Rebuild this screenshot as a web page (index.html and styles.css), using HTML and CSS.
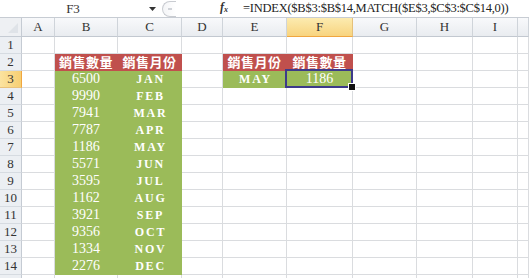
FILE: index.html
```html
<!DOCTYPE html>
<html>
<head>
<meta charset="utf-8">
<link rel="stylesheet" href="styles.css">
</head>
<body>
<div class="fbar">
  <div class="namebox">F3</div>
  <div class="dd"><svg width="7" height="4" viewBox="0 0 7 4"><path d="M0 0h7L3.5 4z" fill="#333"/></svg></div>
  <div class="split"><span class="dash"></span></div>
  <div class="fx">f<sub>x</sub></div>
  <div class="formula">=INDEX($B$3:$B$14,MATCH($E$3,$C$3:$C$14,0))</div>
</div>
<div class="sheet">
  <div class="corner"><svg width="10" height="10" viewBox="0 0 10 10"><path d="M10 0V10H0z" fill="#dfe3e8"/></svg></div>
  <div class="ch">A</div><div class="ch">B</div><div class="ch">C</div><div class="ch">D</div><div class="ch">E</div><div class="ch sel">F</div><div class="ch">G</div><div class="ch">H</div><div class="ch">I</div><div class="ch"></div>

  <div class="rh">1</div><div class="c"></div><div class="c"></div><div class="c"></div><div class="c"></div><div class="c"></div><div class="c"></div><div class="c"></div><div class="c"></div><div class="c"></div><div class="c"></div>

  <div class="rh">2</div><div class="c"></div><div class="c red zh">銷售數量</div><div class="c red zh">銷售月份</div><div class="c"></div><div class="c red zh">銷售月份</div><div class="c red zh">銷售數量</div><div class="c"></div><div class="c"></div><div class="c"></div><div class="c"></div>

  <div class="rh sel">3</div><div class="c"></div><div class="c green num">6500</div><div class="c green mon">JAN</div><div class="c"></div><div class="c green mon">MAY</div><div class="c green num active">1186</div><div class="c"></div><div class="c"></div><div class="c"></div><div class="c"></div>

  <div class="rh">4</div><div class="c"></div><div class="c green num">9990</div><div class="c green mon">FEB</div><div class="c"></div><div class="c"></div><div class="c"></div><div class="c"></div><div class="c"></div><div class="c"></div><div class="c"></div>

  <div class="rh">5</div><div class="c"></div><div class="c green num">7941</div><div class="c green mon">MAR</div><div class="c"></div><div class="c"></div><div class="c"></div><div class="c"></div><div class="c"></div><div class="c"></div><div class="c"></div>

  <div class="rh">6</div><div class="c"></div><div class="c green num">7787</div><div class="c green mon">APR</div><div class="c"></div><div class="c"></div><div class="c"></div><div class="c"></div><div class="c"></div><div class="c"></div><div class="c"></div>

  <div class="rh">7</div><div class="c"></div><div class="c green num">1186</div><div class="c green mon">MAY</div><div class="c"></div><div class="c"></div><div class="c"></div><div class="c"></div><div class="c"></div><div class="c"></div><div class="c"></div>

  <div class="rh">8</div><div class="c"></div><div class="c green num">5571</div><div class="c green mon">JUN</div><div class="c"></div><div class="c"></div><div class="c"></div><div class="c"></div><div class="c"></div><div class="c"></div><div class="c"></div>

  <div class="rh">9</div><div class="c"></div><div class="c green num">3595</div><div class="c green mon">JUL</div><div class="c"></div><div class="c"></div><div class="c"></div><div class="c"></div><div class="c"></div><div class="c"></div><div class="c"></div>

  <div class="rh">10</div><div class="c"></div><div class="c green num">1162</div><div class="c green mon">AUG</div><div class="c"></div><div class="c"></div><div class="c"></div><div class="c"></div><div class="c"></div><div class="c"></div><div class="c"></div>

  <div class="rh">11</div><div class="c"></div><div class="c green num">3921</div><div class="c green mon">SEP</div><div class="c"></div><div class="c"></div><div class="c"></div><div class="c"></div><div class="c"></div><div class="c"></div><div class="c"></div>

  <div class="rh">12</div><div class="c"></div><div class="c green num">9356</div><div class="c green mon">OCT</div><div class="c"></div><div class="c"></div><div class="c"></div><div class="c"></div><div class="c"></div><div class="c"></div><div class="c"></div>

  <div class="rh">13</div><div class="c"></div><div class="c green num">1334</div><div class="c green mon">NOV</div><div class="c"></div><div class="c"></div><div class="c"></div><div class="c"></div><div class="c"></div><div class="c"></div><div class="c"></div>

  <div class="rh">14</div><div class="c"></div><div class="c green num">2276</div><div class="c green mon">DEC</div><div class="c"></div><div class="c"></div><div class="c"></div><div class="c"></div><div class="c"></div><div class="c"></div><div class="c"></div>

  <div class="rh"></div><div class="c"></div><div class="c"></div><div class="c"></div><div class="c"></div><div class="c"></div><div class="c"></div><div class="c"></div><div class="c"></div><div class="c"></div><div class="c"></div>
</div>
</body>
</html>
```
FILE: styles.css
```css
* { box-sizing: border-box; }
html, body { margin: 0; padding: 0; background: #fff; overflow: hidden; }
body { width: 529px; height: 278px; font-family: "Liberation Serif", serif; color: #222; }

.fbar {
  height: 18px;
  display: flex;
  align-items: center;
  border-bottom: 1px solid #c7ccd3;
  background: #fff;
}
.namebox { width: 146px; text-align: center; font-size: 13px; line-height: 17px; color: #333; }
.dd { width: 12px; display: flex; align-items: center; justify-content: center; padding-top: 1px; }
.split {
  margin-left: 4px;
  width: 14px; height: 16px;
  border: 1px solid #c9ccd1;
  border-right: none;
  border-radius: 8px 0 0 8px;
  background: linear-gradient(90deg, #f4f5f7, #fff);
  display: flex; align-items: center; justify-content: center;
}
.dash { width: 4px; height: 2px; background: #d0d3d8; display: block; }
.fx {
  margin-left: 44px;
  width: 20px;
  font-style: italic; font-weight: bold; font-size: 12px; color: #333; line-height: 17px;
}
.fx sub { font-size: 8px; vertical-align: -1px; }
.formula {
  margin-left: 3px;
  font-size: 12.5px; letter-spacing: -0.25px; color: #222; white-space: nowrap; line-height: 17px;
}

.sheet {
  display: grid;
  grid-template-columns: 22px 33px 63px 64px 41px 64px 66px 64px 56px 45px 1fr;
  grid-template-rows: 19px repeat(15, 17px);
}
.corner {
  background: #eef0f3;
  border-right: 1px solid #c5cbd3;
  border-bottom: 1px solid #c5cbd3;
  display: flex; align-items: flex-end; justify-content: flex-end;
  padding: 0 3px 3px 0;
}
.ch {
  background: linear-gradient(#f8f9fb, #e9ecf0);
  border-right: 1px solid #cfd4da;
  border-bottom: 1px solid #c2c8d0;
  text-align: center; font-size: 13px; line-height: 18px; color: #333;
}
.ch.sel {
  background: linear-gradient(#fcebb0, #f8d47f);
  border-bottom: 1px solid #f0a640;
  border-right-color: #e5c07a;
}
.rh {
  background: #eceff3;
  border-right: 1px solid #c5cbd3;
  border-bottom: 1px solid #d6dbe1;
  text-align: center; font-size: 13px; line-height: 16px; color: #333;
}
.rh.sel {
  background: linear-gradient(90deg, #fbe3a0, #f7cf72);
  border-right: 1px solid #f0a640;
  border-bottom-color: #e9c27c;
}
.c {
  border-right: 1px solid #dadcdf;
  border-bottom: 1px solid #dadcdf;
  color: #fff; text-align: center; line-height: 16px; white-space: nowrap;
}
.red { background: #c0504d; border-color: #c0504d; }
.green { background: #9bbb59; border-color: #9bbb59; }
.zh { font-family: "Noto Sans CJK TC", "Noto Sans CJK SC", sans-serif; font-weight: 700; font-size: 13px; letter-spacing: 0.5px; }
.num { font-size: 14px; }
.mon { font-size: 12px; font-weight: bold; letter-spacing: 1.8px; padding-left: 2px; }
.active { position: relative; }
.active::after {
  content: "";
  position: absolute;
  left: -2px; top: -2px; right: -1px; bottom: -1px;
  border: 2px solid #3d3a8a;
}
.active::before {
  content: "";
  position: absolute;
  right: -4px; bottom: -4px;
  width: 6px; height: 6px;
  background: #111;
  border: 1px solid #fff;
  z-index: 2;
}
```
